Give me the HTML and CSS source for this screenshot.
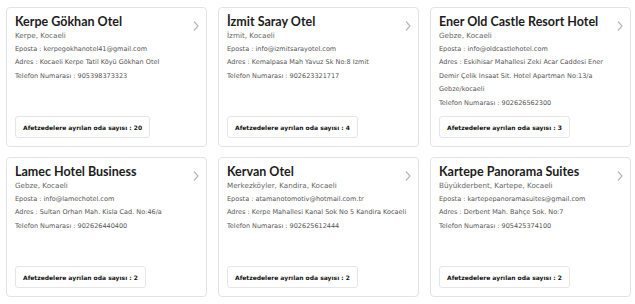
FILE: index.html
```html
<!DOCTYPE html>
<html lang="tr">
<head>
    <meta charset="UTF-8">
    <meta name="viewport" content="width=device-width, initial-scale=1.0">
    <title>Oteller</title>
    <link rel="stylesheet" href="styles.css">
</head>
<body>
    <div class="hotel-grid">
        <div class="hotel-card">
            <div class="card-head">
                <div>
                    <h2 class="hotel-name">Kerpe Gökhan Otel</h2>
                    <p class="hotel-place">Kerpe, Kocaeli</p>
                </div>
                <svg class="chevron" width="6" height="10" viewBox="0 0 6 10"><polyline points="1,0.5 5,5 1,9.5" /></svg>
            </div>
            <p class="info">Eposta : kerpegokhanotel41@gmail.com</p>
            <p class="info">Adres : Kocaeli Kerpe Tatil Köyü Gökhan Otel</p>
            <p class="info">Telefon Numarası : 905398373323</p>
            <div class="rooms">Afetzedelere ayrılan oda sayısı : 20</div>
        </div>

        <div class="hotel-card">
            <div class="card-head">
                <div>
                    <h2 class="hotel-name">İzmit Saray Otel</h2>
                    <p class="hotel-place">İzmit, Kocaeli</p>
                </div>
                <svg class="chevron" width="6" height="10" viewBox="0 0 6 10"><polyline points="1,0.5 5,5 1,9.5" /></svg>
            </div>
            <p class="info">Eposta : info@izmitsarayotel.com</p>
            <p class="info">Adres : Kemalpasa Mah Yavuz Sk No:8 Izmit</p>
            <p class="info">Telefon Numarası : 902623321717</p>
            <div class="rooms">Afetzedelere ayrılan oda sayısı : 4</div>
        </div>

        <div class="hotel-card">
            <div class="card-head">
                <div>
                    <h2 class="hotel-name">Ener Old Castle Resort Hotel</h2>
                    <p class="hotel-place">Gebze, Kocaeli</p>
                </div>
                <svg class="chevron" width="6" height="10" viewBox="0 0 6 10"><polyline points="1,0.5 5,5 1,9.5" /></svg>
            </div>
            <p class="info">Eposta : info@oldcastlehotel.com</p>
            <p class="info">Adres : Eskihisar Mahallesi Zeki Acar Caddesi Ener Demir Çelik Insaat Sit. Hotel Apartman No:13/a Gebze/kocaeli</p>
            <p class="info">Telefon Numarası : 902626562300</p>
            <div class="rooms">Afetzedelere ayrılan oda sayısı : 3</div>
        </div>

        <div class="hotel-card">
            <div class="card-head">
                <div>
                    <h2 class="hotel-name">Lamec Hotel Business</h2>
                    <p class="hotel-place">Gebze, Kocaeli</p>
                </div>
                <svg class="chevron" width="6" height="10" viewBox="0 0 6 10"><polyline points="1,0.5 5,5 1,9.5" /></svg>
            </div>
            <p class="info">Eposta : info@lamechotel.com</p>
            <p class="info">Adres : Sultan Orhan Mah. Kisla Cad. No:46/a</p>
            <p class="info">Telefon Numarası : 902626440400</p>
            <div class="rooms">Afetzedelere ayrılan oda sayısı : 2</div>
        </div>

        <div class="hotel-card">
            <div class="card-head">
                <div>
                    <h2 class="hotel-name">Kervan Otel</h2>
                    <p class="hotel-place">Merkezköyler, Kandira, Kocaeli</p>
                </div>
                <svg class="chevron" width="6" height="10" viewBox="0 0 6 10"><polyline points="1,0.5 5,5 1,9.5" /></svg>
            </div>
            <p class="info">Eposta : atamanotomotiv@hotmail.com.tr</p>
            <p class="info">Adres : Kerpe Mahallesi Kanal Sok No 5 Kandira Kocaeli</p>
            <p class="info">Telefon Numarası : 902625612444</p>
            <div class="rooms">Afetzedelere ayrılan oda sayısı : 2</div>
        </div>

        <div class="hotel-card">
            <div class="card-head">
                <div>
                    <h2 class="hotel-name">Kartepe Panorama Suites</h2>
                    <p class="hotel-place">Büyükderbent, Kartepe, Kocaeli</p>
                </div>
                <svg class="chevron" width="6" height="10" viewBox="0 0 6 10"><polyline points="1,0.5 5,5 1,9.5" /></svg>
            </div>
            <p class="info">Eposta : kartepepanoramasuites@gmail.com</p>
            <p class="info">Adres : Derbent Mah. Bahçe Sok. No:7</p>
            <p class="info">Telefon Numarası : 905425374100</p>
            <div class="rooms">Afetzedelere ayrılan oda sayısı : 2</div>
        </div>
    </div>
</body>
</html>
```

FILE: styles.css
```css
body {
    font-family: "DejaVu Sans", sans-serif;
    background-color: #ffffff;
    color: #222;
    margin: 0;
    padding: 7px 5px 7px 6px;
}
.hotel-grid {
    display: grid;
    grid-template-columns: repeat(3, 201px);
    grid-auto-rows: 140px;
    column-gap: 11px;
    row-gap: 10px;
}
.hotel-card {
    border: 1px solid #e3e3e3;
    border-radius: 4px;
    padding: 6px 7px 8px 8px;
    display: flex;
    flex-direction: column;
    box-sizing: border-box;
}
.card-head {
    display: flex;
    justify-content: space-between;
    align-items: flex-start;
}
.hotel-name {
    font-family: Lato, sans-serif;
    font-size: 12.5px;
    font-weight: bold;
    margin: 0;
    line-height: 15px;
    color: #1c1c1c;
}
.hotel-place {
    font-size: 7.2px;
    color: #666;
    margin: 1px 0 0;
    line-height: 11px;
}
.chevron {
    flex-shrink: 0;
    fill: none;
    stroke: #b8b8b8;
    stroke-width: 1.2;
    margin-top: 7px;
}
.info {
    font-size: 6.5px;
    color: #555;
    margin: 0;
    line-height: 13.4px;
}
.card-head + .info {
    margin-top: 2px;
}
.rooms {
    margin-top: auto;
    align-self: flex-start;
    border: 1px solid #e6e6e6;
    border-radius: 3px;
    padding: 0 7px;
    height: 22px;
    line-height: 22px;
    font-size: 6px;
    font-weight: bold;
    color: #111;
    box-sizing: border-box;
}
```
